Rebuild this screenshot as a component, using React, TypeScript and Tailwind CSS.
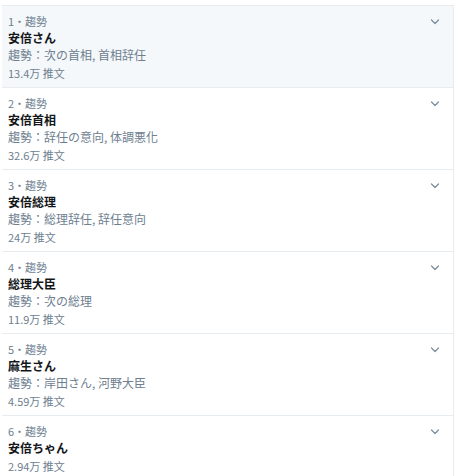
const trends = [
  { rank: 1, name: "安倍さん", sub: "趨勢：次の首相, 首相辞任", count: "13.4万 推文" },
  { rank: 2, name: "安倍首相", sub: "趨勢：辞任の意向, 体調悪化", count: "32.6万 推文" },
  { rank: 3, name: "安倍総理", sub: "趨勢：総理辞任, 辞任意向", count: "24万 推文" },
  { rank: 4, name: "総理大臣", sub: "趨勢：次の総理", count: "11.9万 推文" },
  { rank: 5, name: "麻生さん", sub: "趨勢：岸田さん, 河野大臣", count: "4.59万 推文" },
  { rank: 6, name: "安倍ちゃん", sub: "", count: "2.94万 推文" },
];

function Chevron() {
  return (
    <svg width="10" height="6" viewBox="0 0 10 6" className="mt-[6px] text-[#7a8b99]">
      <path d="M1.5 1L5 4.5L8.5 1" fill="none" stroke="currentColor" strokeWidth="1.2" strokeLinecap="round" strokeLinejoin="round" />
    </svg>
  );
}

export default function App() {
  return (
    <div className="min-h-screen bg-white pt-[5px] pl-[2px] font-['Noto_Sans_CJK_TC','Noto_Sans_CJK_JP',sans-serif]">
      <div className="w-[452px] border-t border-r border-[#e6ecf0]">
        {trends.map((t) => (
          <div
            key={t.rank}
            className={`flex items-start justify-between border-b border-[#e6ecf0] h-[82px] pl-[6px] pr-[13px] pt-[7px] ${
              t.rank === 1 ? "bg-[#f5f8fa]" : "bg-white"
            }`}
          >
            <div className="flex flex-col">
              <span className="text-[11px] leading-[16px] text-[#6e8090]">{t.rank}・趨勢</span>
              <span className="text-[12px] leading-[17px] font-bold text-[#14171a]">{t.name}</span>
              {t.sub && (
                <span className="text-[12px] leading-[17px] text-[#6e8090]">{t.sub}</span>
              )}
              <span className="mt-[2px] text-[11px] leading-[17px] text-[#6e8090]">{t.count}</span>
            </div>
            <Chevron />
          </div>
        ))}
      </div>
    </div>
  );
}
